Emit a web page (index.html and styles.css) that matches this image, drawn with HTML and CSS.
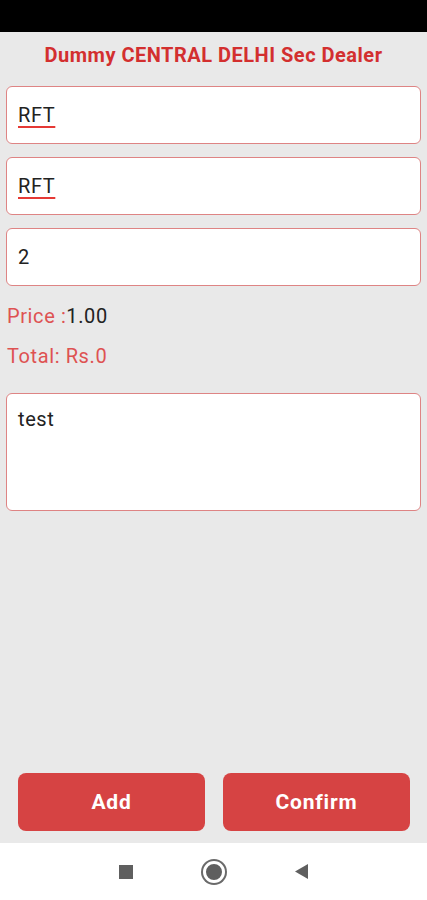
FILE: index.html
```html
<!DOCTYPE html>
<html lang="en">
<head>
  <meta charset="UTF-8">
  <title>Dummy CENTRAL DELHI Sec Dealer</title>
  <link rel="stylesheet" href="styles.css">
</head>
<body>

  <div class="status-bar"></div>

  <div class="screen">
    <h1 class="title">Dummy CENTRAL DELHI Sec Dealer</h1>

    <form id="itemForm" class="item-form">
      <div class="field"><span class="misspelled">RFT</span></div>
      <div class="field"><span class="misspelled">RFT</span></div>
      <div class="field">2</div>

      <p class="line"><span class="label">Price :</span>1.00</p>
      <p class="line line-total"><span class="label">Total: Rs.0</span></p>

      <div class="field field-area">test</div>
    </form>

    <div class="actions">
      <button type="button" class="btn">Add</button>
      <button type="button" class="btn">Confirm</button>
    </div>
  </div>

  <div class="nav-bar">
    <span class="nav-square"></span>
    <span class="nav-circle"></span>
    <svg class="nav-back" width="14" height="15" viewBox="0 0 14 15">
      <polygon points="13,0 13,15 0,7.5" fill="#5f5f5f"/>
    </svg>
  </div>

</body>
</html>
```

FILE: styles.css
```css
body {
  margin: 0;
  font-family: Roboto, "Liberation Sans", Arial, sans-serif;
  background-color: #000;
}

.status-bar {
  height: 32px;
  background-color: #000;
}

.screen {
  height: 811px;
  background-color: #e9e9e9;
  padding: 0 6px;
  display: flex;
  flex-direction: column;
  box-sizing: border-box;
}

.title {
  margin: 10px 0 18px;
  font-size: 20px;
  line-height: 26px;
  font-weight: bold;
  letter-spacing: 0.5px;
  text-align: center;
  color: #d32f2f;
}

.item-form {
  flex: 1;
  display: flex;
  flex-direction: column;
}

.field {
  height: 58px;
  margin-bottom: 13px;
  padding: 0 11px;
  display: flex;
  align-items: center;
  background-color: #fff;
  border: 1px solid #de8484;
  border-radius: 6px;
  box-sizing: border-box;
  font-size: 20px;
  letter-spacing: 0.6px;
  color: #222;
}

.field:nth-child(3) {
  margin-bottom: 0;
}

.misspelled {
  text-decoration: underline;
  text-decoration-color: #e53935;
  text-decoration-thickness: 2px;
  text-underline-offset: 4px;
}

.field-area {
  height: 118px;
  margin-top: 25px;
  align-items: flex-start;
  padding-top: 13px;
}

.line {
  margin: 18px 0 0;
  padding-left: 1px;
  font-size: 20px;
  line-height: 24px;
  letter-spacing: 0.6px;
  color: #222;
}

.line-total {
  margin-top: 16px;
}

.label {
  color: #de5252;
}

.actions {
  display: flex;
  gap: 18px;
  padding: 0 11px 12px 12px;
}

.btn {
  flex: 1;
  height: 58px;
  border: none;
  border-radius: 8px;
  background-color: #d64343;
  color: #fff;
  font-family: Roboto, "Liberation Sans", Arial, sans-serif;
  font-size: 21px;
  font-weight: bold;
  letter-spacing: 0.8px;
}

.nav-bar {
  height: 57px;
  background-color: #fff;
  display: flex;
  align-items: center;
  justify-content: center;
  gap: 70px;
}

.nav-square {
  width: 14px;
  height: 14px;
  background-color: #5f5f5f;
}

.nav-circle {
  width: 16px;
  height: 16px;
  border-radius: 50%;
  background-color: #5f5f5f;
  border: 3px solid #fff;
  box-shadow: 0 0 0 2px #6a6a6a;
}
```
